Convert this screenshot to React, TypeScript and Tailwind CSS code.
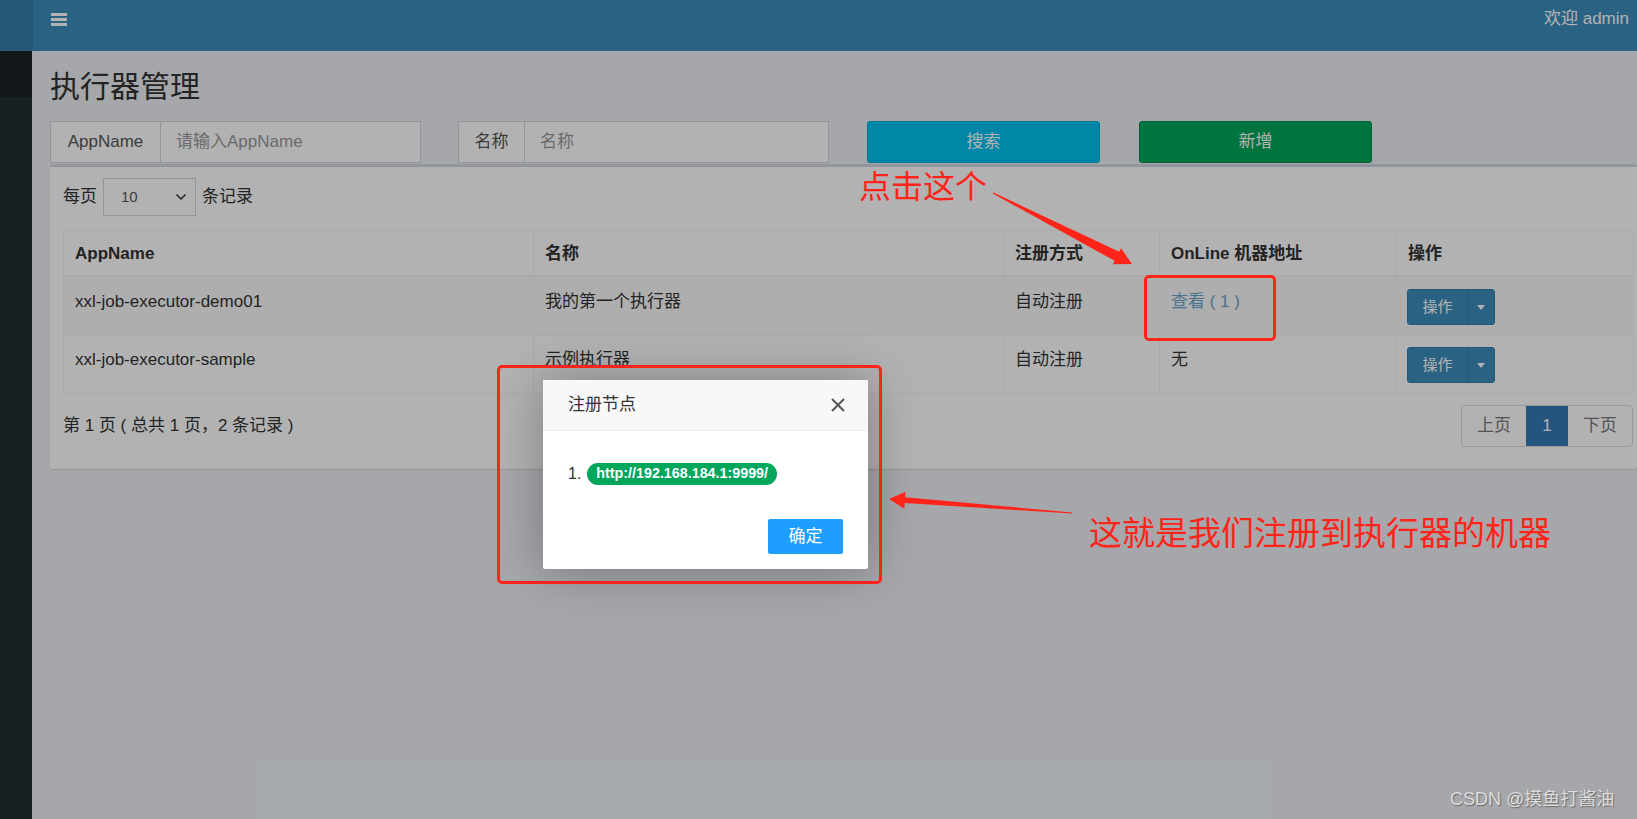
import React from "react";

function Caret() {
  return (
    <svg width="8" height="5" viewBox="0 0 8 5" className="block">
      <path d="M0 0 L8 0 L4 5 Z" fill="#ffffff" />
    </svg>
  );
}

function OpButton() {
  return (
    <div className="flex h-[36px] w-[88px] overflow-hidden rounded-[3px] border border-[#367fa9] bg-[#3c8dbc] text-[15px] text-white">
      <div className="flex w-[59px] items-center justify-center">操作</div>
      <div className="flex flex-1 items-center justify-center border-l border-[#367fa9]">
        <Caret />
      </div>
    </div>
  );
}

export default function App() {
  return (
    <div className="relative h-[819px] w-[1637px] overflow-hidden bg-[#ecf0f5] font-['Liberation_Sans','Noto_Sans_CJK_SC',sans-serif] text-[17px] text-[#333]">
      {/* header */}
      <header className="flex h-[51px] bg-[#3c8dbc]">
        <div className="w-[33px] bg-[#367fa9]" />
        <div className="flex flex-1 items-center justify-between pl-[18px] pr-[8px]">
          <div className="flex w-[16px] flex-col gap-[2px] pb-[12px]">
            <div className="h-[3px] bg-white" />
            <div className="h-[3px] bg-white" />
            <div className="h-[3px] bg-white" />
          </div>
          <div className="pb-[14px] text-[17px] text-white">欢迎 admin</div>
        </div>
      </header>

      <div className="flex h-[768px]">
        {/* sidebar */}
        <aside className="w-[33px] bg-[#222d32]">
          <div className="h-[46px] bg-[#1a2226]" />
        </aside>

        {/* main */}
        <main className="flex-1 pl-[18px] pt-[18px]">
          <h1 className="text-[30px] leading-[36px] text-[#333]">执行器管理</h1>

          <div className="mt-[16px] flex h-[42px]">
            <div className="flex w-[371px] border border-[#d2d6de] bg-white">
              <div className="flex w-[110px] items-center justify-center border-r border-[#d2d6de] text-[#555]">AppName</div>
              <div className="flex flex-1 items-center pl-[15px] text-[#999]">请输入AppName</div>
            </div>
            <div className="ml-[37px] flex w-[371px] border border-[#d2d6de] bg-white">
              <div className="flex w-[66px] items-center justify-center border-r border-[#d2d6de] text-[#555]">名称</div>
              <div className="flex flex-1 items-center pl-[15px] text-[#999]">名称</div>
            </div>
            <div className="ml-[38px] flex w-[233px] items-center justify-center rounded-[3px] border border-[#00acd6] bg-[#00c0ef] text-white">搜索</div>
            <div className="ml-[39px] flex w-[233px] items-center justify-center rounded-[3px] border border-[#008d4c] bg-[#00a65a] text-white">新增</div>
          </div>

          {/* box */}
          <div className="mt-[1px] h-[305px] rounded-[3px] border-t-[3px] border-[#d2d6de] bg-white pl-[13px] pr-[3px] pt-[11px] shadow-[0_1px_1px_rgba(0,0,0,0.1)]">
            <div className="flex h-[38px] items-center">
              <span>每页</span>
              <div className="ml-[6px] flex h-[38px] w-[93px] items-center justify-between border border-[#d2d6de] bg-white pl-[17px] pr-[8px] text-[15px] text-[#555]">
                <span>10</span>
                <svg width="12" height="8" viewBox="0 0 12 8">
                  <path d="M1.5 1.5 L6 6 L10.5 1.5" fill="none" stroke="#333" strokeWidth="1.5" />
                </svg>
              </div>
              <span className="ml-[6px]">条记录</span>
            </div>

            <table className="mt-[14px] w-[1570px] table-fixed border-collapse">
              <colgroup>
                <col className="w-[470px]" />
                <col className="w-[470px]" />
                <col className="w-[156px]" />
                <col className="w-[237px]" />
                <col className="w-[237px]" />
              </colgroup>
              <thead>
                <tr>
                  {["AppName", "名称", "注册方式", "OnLine 机器地址", "操作"].map((h) => (
                    <th
                      key={h}
                      className="border border-b-2 border-[#f4f4f4] px-[11px] pb-[9px] pt-[11px] text-left text-[17px] font-bold leading-[24px]"
                    >
                      {h}
                    </th>
                  ))}
                </tr>
              </thead>
              <tbody>
                <tr className="bg-[#f9f9f9]">
                  <td className="border border-[#f4f4f4] px-[11px] pb-[10px] pt-[13px] align-top leading-[24px]">xxl-job-executor-demo01</td>
                  <td className="border border-[#f4f4f4] px-[11px] pb-[10px] pt-[13px] align-top leading-[24px]">我的第一个执行器</td>
                  <td className="border border-[#f4f4f4] px-[11px] pb-[10px] pt-[13px] align-top leading-[24px]">自动注册</td>
                  <td className="border border-[#f4f4f4] px-[11px] pb-[10px] pt-[13px] align-top leading-[24px] text-[#6aa3cc]">查看 ( 1 )</td>
                  <td className="border border-[#f4f4f4] px-[10px] pb-[10px] pt-[12px] align-top">
                    <OpButton />
                  </td>
                </tr>
                <tr>
                  <td className="border border-[#f4f4f4] px-[11px] pb-[10px] pt-[12px] align-top leading-[24px]">xxl-job-executor-sample</td>
                  <td className="border border-[#f4f4f4] px-[11px] pb-[10px] pt-[12px] align-top leading-[24px]">示例执行器</td>
                  <td className="border border-[#f4f4f4] px-[11px] pb-[10px] pt-[12px] align-top leading-[24px]">自动注册</td>
                  <td className="border border-[#f4f4f4] px-[11px] pb-[10px] pt-[12px] align-top leading-[24px]">无</td>
                  <td className="border border-[#f4f4f4] px-[10px] pb-[10px] pt-[11px] align-top">
                    <OpButton />
                  </td>
                </tr>
              </tbody>
            </table>

            <div className="mt-[11px] flex h-[42px] w-[1570px] items-center justify-between">
              <span>第 1 页 ( 总共 1 页，2 条记录 )</span>
              <div className="flex h-[42px] overflow-hidden rounded-[4px] border border-[#ddd] text-[17px]">
                <div className="flex w-[64px] items-center justify-center text-[#777]">上页</div>
                <div className="flex w-[42px] items-center justify-center bg-[#337ab7] text-white">1</div>
                <div className="flex w-[64px] items-center justify-center text-[#777]">下页</div>
              </div>
            </div>
          </div>
        </main>
      </div>

      {/* backdrop */}
      <div className="absolute inset-0 bg-black/30" />

      {/* modal */}
      <div className="absolute left-[543px] top-[380px] flex h-[189px] w-[325px] flex-col rounded-[2px] bg-white shadow-[1px_1px_50px_rgba(0,0,0,0.3)]">
        <div className="flex h-[51px] items-center justify-between border-b border-[#eee] bg-[#f8f8f8] pl-[25px] pr-[22px]">
          <span className="text-[17px] text-[#333]">注册节点</span>
          <svg width="16" height="16" viewBox="0 0 16 16">
            <path d="M2 2 L14 14 M14 2 L2 14" stroke="#555" strokeWidth="2" />
          </svg>
        </div>
        <div className="flex flex-col pl-[25px] pr-[25px] pt-[32px]">
          <div className="flex h-[22px] items-center">
            <span className="text-[16px] text-[#333]">1.</span>
            <span className="ml-[6px] flex h-[22px] items-center rounded-full bg-[#00a65a] px-[9px] text-[14.3px] font-bold text-white">
              http://192.168.184.1:9999/
            </span>
          </div>
          <div className="mt-[34px] flex justify-end">
            <div className="flex h-[35px] w-[75px] items-center justify-center rounded-[2px] bg-[#1e9fff] text-[17px] text-white">确定</div>
          </div>
        </div>
      </div>

      {/* annotations */}
      <div className="absolute left-[1144px] top-[275px] h-[66px] w-[132px] rounded-[5px] border-[3px] border-[#ff2419]" />
      <div className="absolute left-[497px] top-[365px] h-[219px] w-[385px] rounded-[5px] border-[3px] border-[#ff2419]" />
      <div className="absolute left-[859px] top-[171px] text-[32px] leading-[32px] text-[#ff2419]">点击这个</div>
      <div className="absolute left-[1089px] top-[517px] text-[33px] leading-[33px] text-[#ff2419]">这就是我们注册到执行器的机器</div>
      <svg className="pointer-events-none absolute inset-0" width="1637" height="819" viewBox="0 0 1637 819">
        <polygon
          points="993.3,192.5 1119.2,251.7 1121.0,248.3 1132,264 1112.8,264.3 1114.6,260.8 992.7,193.5"
          fill="#ff2419"
        />
        <polygon
          points="1072.04,512.5 905.2,497.3 905.6,491.7 889,499 904.3,508.7 904.7,503.1 1071.96,513.5"
          fill="#ff2419"
        />
      </svg>

      {/* watermark */}
      <div className="absolute left-[1450px] top-[787px] text-[18px] leading-[24px] text-[#dcdcdc] [text-shadow:1px_1px_1px_#6b6b6b]">
        CSDN @摸鱼打酱油
      </div>
    </div>
  );
}
